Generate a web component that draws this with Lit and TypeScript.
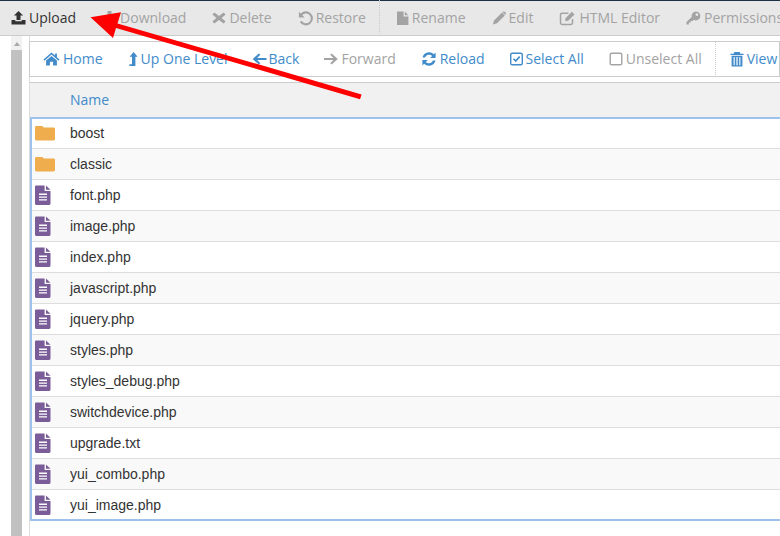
import { LitElement, html, css, svg } from "lit";
import { customElement } from "lit/decorators.js";

const ICONS: Record<string, any> = {
  upload: svg`<path d="M8 1 L12.6 5.6 H10 V10 H6 V5.6 H3.4 Z"/><path d="M1 10 H4.8 V11.2 H11.2 V10 H15 V14.4 H1 Z"/>`,
  download: svg`<path d="M6 1 H10 V5.5 H12.6 L8 10.2 L3.4 5.5 H6 Z"/><path d="M1 10 H4.8 L8 12 L11.2 10 H15 V14.4 H1 Z"/>`,
  del: svg`<path d="M3.4 2.6 L8 6 L12.6 2.6 L14.6 4.6 L10.6 8 L14.6 11.6 L12.6 13.6 L8 10 L3.4 13.6 L1.4 11.6 L5.4 8 L1.4 4.6 Z"/>`,
  restore: svg`<path fill="none" stroke="currentColor" stroke-width="2.1" d="M3.4 5 A6 6 0 1 1 3.2 11.4"/><path d="M1.4 1.8 V7.6 H7.2 Z"/>`,
  rename: svg`<path d="M2 1.6 H8.6 V6.4 H13.4 V15 H2 Z"/><path d="M9.8 1.6 L13.4 5.2 H9.8 Z"/>`,
  edit: svg`<path d="M11 2.6 L13.8 5.4 L6 13.2 L1.8 14.6 L3 10.6 Z"/><path d="M11.8 1.8 Q12.8 1 13.8 1.8 L14.6 2.6 Q15.2 3.6 14.6 4.4 L14.2 4.8 L11.4 2.2 Z"/>`,
  htmledit: svg`<path fill="none" stroke="currentColor" stroke-width="1.5" d="M13 9 V13 Q13 14.4 11.6 14.4 H2.6 Q1 14.4 1 13 V4.6 Q1 3.2 2.6 3.2 H9"/><path d="M12.4 1.8 L15 4.4 L8.6 10.8 L5.8 11.2 L6 8.2 Z"/>`,
  key: svg`<path fill-rule="evenodd" d="M10.5 1.6 A4.4 4.4 0 1 1 8.2 9.8 L7 11 H5.2 V12.6 H3.4 V14.4 H1 V12 L6.2 7 A4.4 4.4 0 0 1 10.5 1.6 Z M11.4 3.2 A1.4 1.4 0 1 0 11.41 3.2 Z"/>`,
  home: svg`<path d="M8 1.4 L11.6 4.6 V2.4 H13.4 V6.2 L16 8.6 L15 9.7 L8 3.6 L1 9.7 L0 8.6 Z"/><path d="M8 5 L13.4 9.6 V14.6 H9.6 V10.8 H6.4 V14.6 H2.6 V9.6 Z"/>`,
  up: svg`<path d="M8.6 1 L12.6 5.8 H10.4 V15 H4.4 V13.2 H7 V5.8 H4.6 Z"/>`,
  back: svg`<path d="M7.4 2.4 L8.8 3.8 L5.7 6.9 H15 V9.1 H5.7 L8.8 12.2 L7.4 13.6 L1.2 8 Z"/>`,
  forward: svg`<path d="M8.6 2.4 L7.2 3.8 L10.3 6.9 H1 V9.1 H10.3 L7.2 12.2 L8.6 13.6 L14.8 8 Z"/>`,
  reload: svg`<path d="M14.6 1.6 V7 H9.2 L11.2 5 A4.4 4.4 0 0 0 4 6.6 H1.5 A6.8 6.8 0 0 1 12.9 3.3 Z"/><path d="M1.4 14.4 V9 H6.8 L4.8 11 A4.4 4.4 0 0 0 12 9.4 H14.5 A6.8 6.8 0 0 1 3.1 12.7 Z"/>`,
  checked: svg`<rect x="2.2" y="2.2" width="11.6" height="11.6" rx="1.6" fill="none" stroke="currentColor" stroke-width="1.4"/><path fill="none" stroke="currentColor" stroke-width="1.6" d="M5 7.8 L7.2 10 L11.2 5.6"/>`,
  unchecked: svg`<rect x="2.2" y="2.2" width="11.6" height="11.6" rx="1.6" fill="none" stroke="currentColor" stroke-width="1.4"/>`,
  trash: svg`<path d="M5.4 1 H10.6 L11.4 2.8 H14.6 V4 H1.4 V2.8 H4.6 Z"/><path fill-rule="evenodd" d="M2.6 4.8 H13.4 V15.4 H2.6 Z M4.6 6 V14.2 H5.7 V6 Z M7.4 6 V14.2 H8.6 V6 Z M10.3 6 V14.2 H11.4 V6 Z"/>`,
};

type Item = { i: string; t: string; w: number; on?: boolean; div?: boolean };

const TOP: Item[] = [
  { i: "upload", t: "Upload", w: 15, on: true },
  { i: "download", t: "Download", w: 15 },
  { i: "del", t: "Delete", w: 14 },
  { i: "restore", t: "Restore", w: 15 },
  { i: "rename", t: "Rename", w: 12, div: true },
  { i: "edit", t: "Edit", w: 14 },
  { i: "htmledit", t: "HTML Editor", w: 17 },
  { i: "key", t: "Permissions", w: 15 },
];
const NAV: Item[] = [
  { i: "home", t: "Home", w: 17, on: true },
  { i: "up", t: "Up One Level", w: 10, on: true },
  { i: "back", t: "Back", w: 13, on: true },
  { i: "forward", t: "Forward", w: 14 },
  { i: "reload", t: "Reload", w: 16, on: true },
  { i: "checked", t: "Select All", w: 13, on: true },
  { i: "unchecked", t: "Unselect All", w: 14 },
  { i: "trash", t: "View", w: 14, on: true, div: true },
];
const FILES = [
  "boost", "classic", "font.php", "image.php", "index.php", "javascript.php", "jquery.php",
  "styles.php", "styles_debug.php", "switchdevice.php", "upgrade.txt", "yui_combo.php", "yui_image.php",
];

const icon = (x: Item) =>
  html`<svg class="ic" style="width:${x.w}px" viewBox="${(16 - x.w) / 2} 0 ${x.w} 16" fill="currentColor">${ICONS[x.i]}</svg>`;

@customElement("app-root")
export class AppRoot extends LitElement {
  static styles = css`
    :host { display: block; width: 780px; height: 536px; overflow: hidden; position: relative;
      background: #fff; font-family: "Open Sans", sans-serif; font-size: 14px; }
    .topbar { height: 33px; padding-bottom: 1px; border-top: 1px solid #1d3146; border-bottom: 1px solid #ccc; background: #e8e8e8;
      display: flex; align-items: center; padding-left: 11px; gap: 26px; white-space: nowrap; }
    .item { display: flex; align-items: center; gap: 3px; color: #a3a3a3; flex: none; position: relative; }
    .topbar .item.on { color: #333; }
    .ic { height: 16px; flex: none; overflow: visible; }
    .topbar .div { margin-left: 5px; }
    .topbar .div::before { content: ""; position: absolute; left: -18px; top: -8px; height: 34px; border-left: 1px dotted #ccc; }
    .body { display: flex; height: 500px; }
    .side { width: 29px; flex: none; display: flex; padding-left: 11px; box-sizing: border-box; }
    .track { width: 11px; height: 100%; background: #f1f1f1; display: flex; flex-direction: column; align-items: center; }
    .up { width: 0; height: 0; margin-top: 6px; border: 3.5px solid transparent; border-top: 0; border-bottom: 4px solid #a8a8a8; }
    .thumb { margin-top: 4px; width: 11px; flex: 1; background: #c1c1c1; }
    .main { flex: 1; min-width: 0; border-left: 1px solid #ddd; padding-top: 5px; }
    .nav { height: 33px; padding-bottom: 1px; border: 1px solid #ccc; margin-left: -1px; background: #fff;
      display: flex; align-items: center; padding-left: 13px; gap: 25px; white-space: nowrap; }
    .nav .item.on { color: #428bca; }
    .nav .div { margin-left: 3px; }
    .nav .div::before { content: ""; position: absolute; left: -15px; top: -8px; height: 34px; border-left: 1px dotted #ccc; }
    .head { margin: 5px 0 0 -1px; height: 35px; padding-bottom: 2px; box-sizing: border-box; border-top: 1px solid #ccc; border-left: 1px solid #ddd; background: #f1f1f1;
      display: flex; align-items: center; padding-left: 40px; color: #428bca; }
    .table { border: 2px solid #9dc3ec; border-right: 0;
      font-family: "Liberation Sans", Arial, sans-serif; color: #333; box-sizing: border-box; height: 404px; }
    .row { height: 31px; box-sizing: border-box; border-bottom: 1px solid #ddd; display: flex; align-items: center; }
    .row:first-child { height: 30px; padding-bottom: 2px; }
    .row:last-child { border-bottom: 0; height: 29px; }
    .row:nth-child(even) { background: #f9f9f9; }
    .fi { width: 16px; height: 20px; margin-left: 3px; margin-right: 19px; flex: none; }
    .fo { width: 20px; height: 16px; margin-left: 3px; margin-right: 15px; flex: none; }
    .arrow { position: absolute; left: 0; top: 0; pointer-events: none; }
  `;

  row(n: string) {
    const folder = !n.includes(".");
    return html`<div class="row">
      ${folder
        ? html`<svg class="fo" viewBox="0 0 20 16"><path fill="#f0ad4e" d="M1.4 1 H7 Q8 1 8.6 2.4 H18.6 Q20 2.4 20 3.8 V14 Q20 15.4 18.6 15.4 H1.4 Q0 15.4 0 14 V2.4 Q0 1 1.4 1 Z"/></svg>`
        : html`<svg class="fi" viewBox="0 0 16 20">
            <path fill="#7a5c99" d="M1 0.5 H9.6 V6 H15.5 V18.6 Q15.5 20 14.2 20 H1 Q0 20 0 18.6 V1.8 Q0 0.5 1 0.5 Z"/>
            <path fill="#7a5c99" d="M11 0.5 L15.5 4.8 H11 Z"/>
            <path fill="#fff" d="M4 8.6 H12 V10 H4 Z M4 11.4 H12 V12.8 H4 Z M4 14.2 H12 V15.6 H4 Z"/>
          </svg>`}
      <span>${n}</span>
    </div>`;
  }

  render() {
    const it = (x: Item) => html`<div class="item ${x.on ? "on" : ""} ${x.div ? "div" : ""}">${icon(x)}<span>${x.t}</span></div>`;
    return html`
      <div class="topbar">${TOP.map(it)}</div>
      <div class="body">
        <div class="side"><div class="track"><div class="up"></div><div class="thumb"></div></div></div>
        <div class="main">
          <div class="nav">${NAV.map(it)}</div>
          <div class="head">Name</div>
          <div class="table">${FILES.map((f) => this.row(f))}</div>
        </div>
      </div>
      <svg class="arrow" width="780" height="536">
        <path fill="#fe0000" d="M90.5 17.3 L121 12.3 L117.5 23.4 L361.6 94.4 L360 99.2 L116 28 L113 38 Z"/>
      </svg>
    `;
  }
}
